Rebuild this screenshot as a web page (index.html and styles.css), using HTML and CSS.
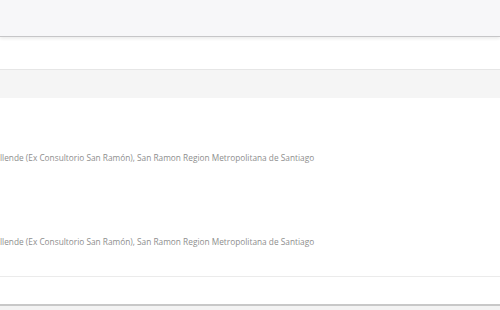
FILE: index.html
```html
<!DOCTYPE html>
<html lang="es">

<head>
    <meta charset="UTF-8">
    <meta name="viewport" content="width=device-width, initial-scale=1.0">
    <title>Centros</title>
    <link rel="stylesheet" href="styles.css">
</head>

<body>
    <header class="topbar"></header>

    <section class="toolbar"></section>

    <div class="table-head"></div>

    <ul class="places">
        <li class="place">
            <p class="address">llende (Ex Consultorio San Ramón), San Ramon Region Metropolitana de Santiago</p>
        </li>
        <li class="place">
            <p class="address">llende (Ex Consultorio San Ramón), San Ramon Region Metropolitana de Santiago</p>
        </li>
    </ul>

    <div class="table-foot"></div>

    <footer class="bottom"></footer>
</body>

</html>
```

FILE: styles.css
```css
*,
*::before,
*::after {
    box-sizing: border-box;
}

body {
    margin: 0;
    padding: 0;
    font-family: "Open Sans", Arial, sans-serif;
    background: #fff;
    height: 310px;
    overflow: hidden;
}

.topbar {
    height: 37px;
    background-color: #f7f7f9;
    border-bottom: 1px solid #c6c6c8;
    box-shadow: 0 2px 3px rgba(0, 0, 0, 0.07);
    position: relative;
}

.toolbar {
    height: 33px;
    border-bottom: 1px solid #e6e6e6;
}

.table-head {
    height: 28px;
    background-color: #f5f5f5;
}

.places {
    list-style-type: none;
    margin: 0;
    padding: 0;
    border-bottom: 1px solid #ebebeb;
    padding-bottom: 10px;
}

.place {
    height: 84px;
    padding-top: 54px;
}

.address {
    margin: 0;
    font-size: 8.3px;
    line-height: 12px;
    color: #8e8e8e;
    white-space: nowrap;
}

.table-foot {
    height: 27px;
}

.bottom {
    height: 10px;
    border-top: 2px solid #c8c8c8;
    background-color: #f3f3f3;
}
```
